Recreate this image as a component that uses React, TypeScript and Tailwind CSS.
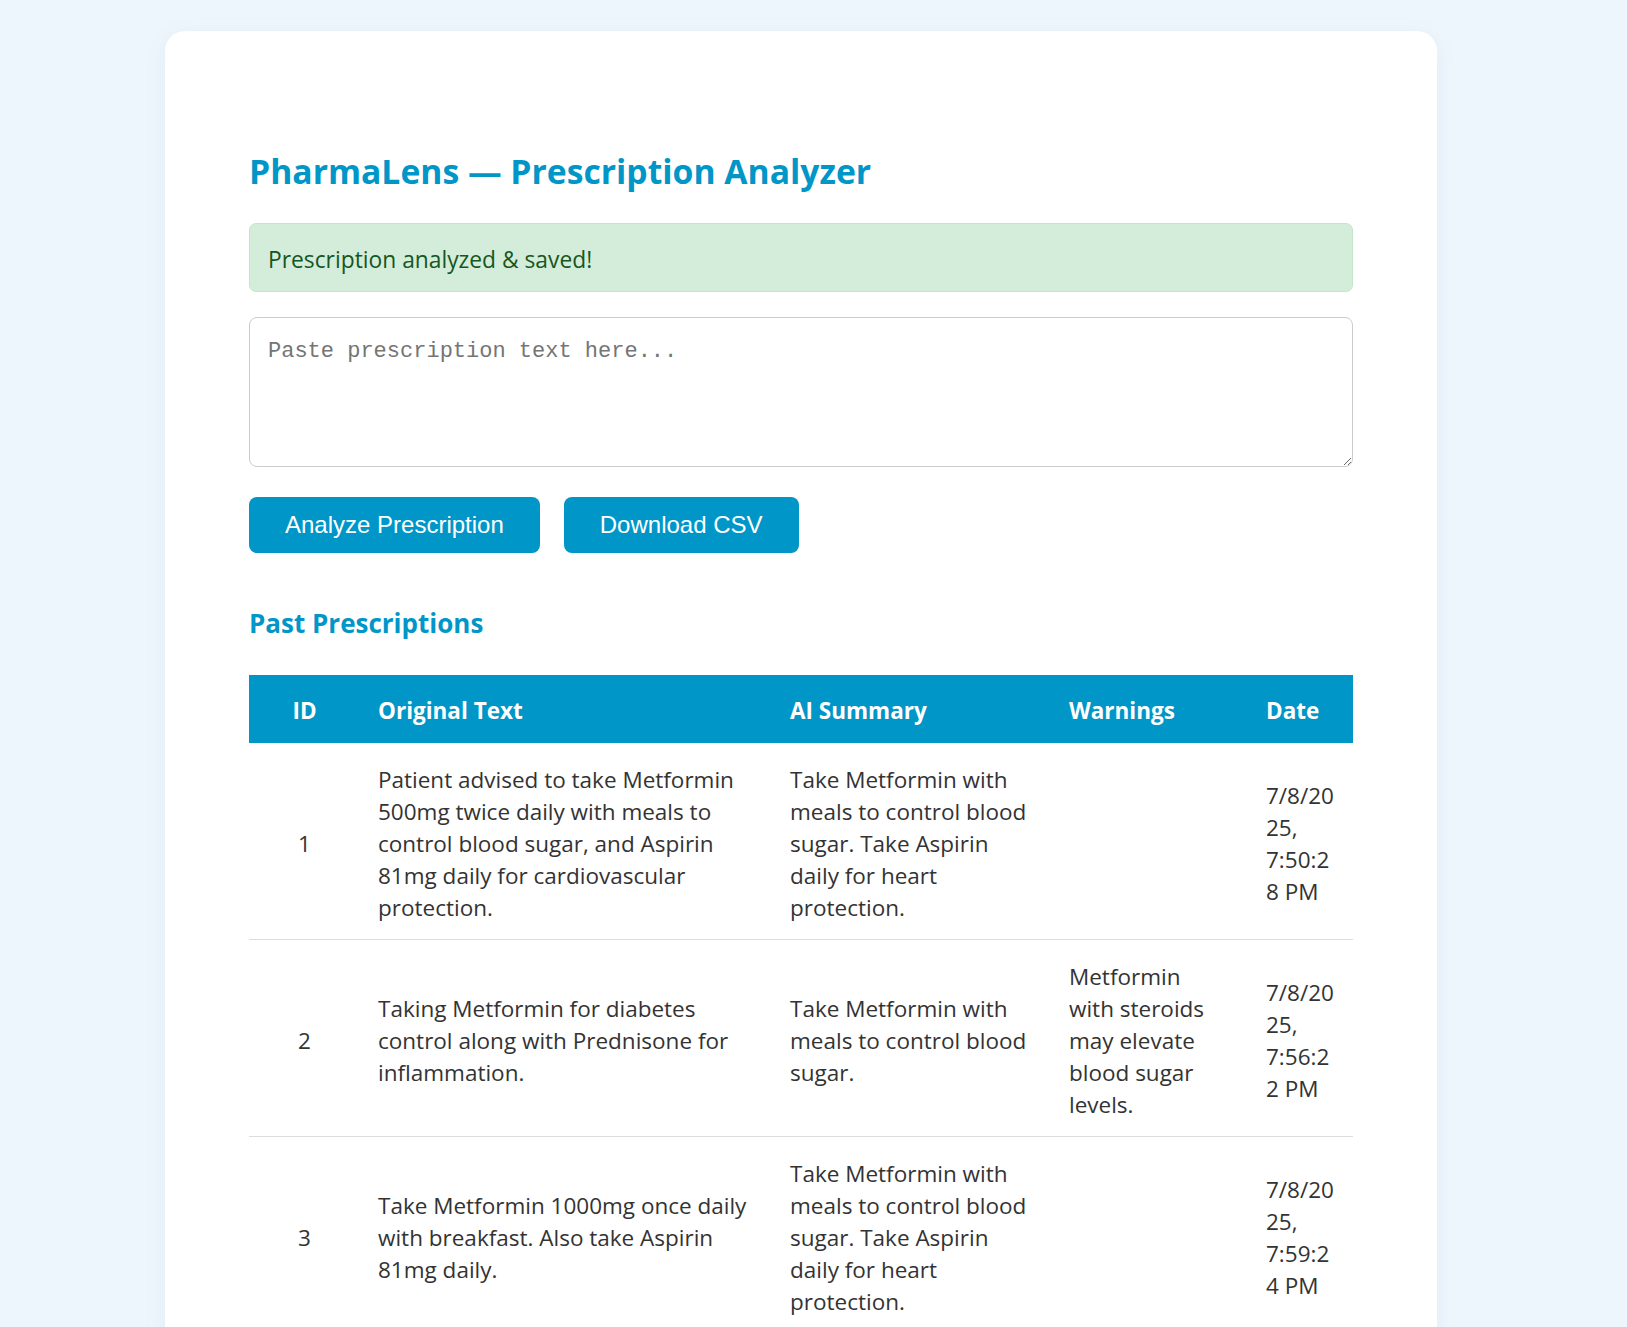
import React from "react";

type Row = {
  id: number;
  original: string[];
  summary: string[];
  warnings: string[];
  date: string[];
};

const rows: Row[] = [
  {
    id: 1,
    original: [
      "Patient advised to take Metformin",
      "500mg twice daily with meals to",
      "control blood sugar, and Aspirin",
      "81mg daily for cardiovascular",
      "protection.",
    ],
    summary: [
      "Take Metformin with",
      "meals to control blood",
      "sugar. Take Aspirin",
      "daily for heart",
      "protection.",
    ],
    warnings: [],
    date: ["7/8/20", "25,", "7:50:2", "8 PM"],
  },
  {
    id: 2,
    original: [
      "Taking Metformin for diabetes",
      "control along with Prednisone for",
      "inflammation.",
    ],
    summary: ["Take Metformin with", "meals to control blood", "sugar."],
    warnings: ["Metformin", "with steroids", "may elevate", "blood sugar", "levels."],
    date: ["7/8/20", "25,", "7:56:2", "2 PM"],
  },
  {
    id: 3,
    original: [
      "Take Metformin 1000mg once daily",
      "with breakfast. Also take Aspirin",
      "81mg daily.",
    ],
    summary: [
      "Take Metformin with",
      "meals to control blood",
      "sugar. Take Aspirin",
      "daily for heart",
      "protection.",
    ],
    warnings: [],
    date: ["7/8/20", "25,", "7:59:2", "4 PM"],
  },
];

function Lines({ lines }: { lines: string[] }) {
  return (
    <>
      {lines.map((l, i) => (
        <span key={i} className="block whitespace-nowrap">
          {l}
        </span>
      ))}
    </>
  );
}

export default function App() {
  return (
    <div
      className="h-[1327px] w-full overflow-hidden bg-[#eef6fd] pt-[31px]"
      style={{ fontFamily: '"Open Sans", "Noto Sans", sans-serif' }}
    >
      <div className="ml-[165px] w-[1272px] rounded-[20px] bg-white px-[84px] pt-[117px] pb-[60px] shadow-[0_4px_24px_rgba(0,80,140,0.06)]">
        <h1 className="text-[33.7px] font-bold leading-[46px] text-[#0096c7]">
          PharmaLens — Prescription Analyzer
        </h1>

        <div className="mt-[29px] flex h-[69px] items-center rounded-[7px] border border-[#c3e6cb] bg-[#d4edda] px-[18px] pt-[4px] text-[22.8px] leading-[32px] text-[#155724]">
          Prescription analyzed &amp; saved!
        </div>

        <textarea
          className="mt-[25px] block h-[150px] w-full rounded-[8px] border border-[#cccccc] bg-white px-[18px] pt-[21px] text-[22px] leading-[26px] text-[#333] outline-none placeholder:text-[#757575]"
          style={{ fontFamily: '"Liberation Mono", "DejaVu Sans Mono", monospace' }}
          placeholder="Paste prescription text here..."
        />

        <div className="mt-[30px] flex gap-[24px]">
          <button
            className="flex h-[56px] items-center rounded-[8px] bg-[#0096c7] px-[36px] text-[24px] text-white"
            style={{ fontFamily: '"Liberation Sans", Arial, sans-serif' }}
          >
            Analyze Prescription
          </button>
          <button
            className="flex h-[56px] items-center rounded-[8px] bg-[#0096c7] px-[36px] text-[24px] text-white"
            style={{ fontFamily: '"Liberation Sans", Arial, sans-serif' }}
          >
            Download CSV
          </button>
        </div>

        <h2 className="mt-[53px] text-[26px] font-bold leading-[34px] text-[#0096c7]">
          Past Prescriptions
        </h2>

        <table className="mt-[35px] w-full table-fixed border-collapse text-[22.5px] leading-[32px] text-[#333]">
          <colgroup>
            <col className="w-[111px]" />
            <col className="w-[412px]" />
            <col className="w-[279px]" />
            <col className="w-[197px]" />
            <col className="w-[105px]" />
          </colgroup>
          <thead>
            <tr className="bg-[#0096c7] text-white">
              <th className="px-[18px] pt-[20px] pb-[16px] text-center font-bold">ID</th>
              <th className="px-[18px] pt-[20px] pb-[16px] text-left font-bold">Original Text</th>
              <th className="px-[18px] pt-[20px] pb-[16px] text-left font-bold">AI Summary</th>
              <th className="px-[18px] pt-[20px] pb-[16px] text-left font-bold">Warnings</th>
              <th className="px-[18px] pt-[20px] pb-[16px] text-left font-bold">Date</th>
            </tr>
          </thead>
          <tbody>
            {rows.map((r) => (
              <tr key={r.id} className="border-b border-[#dddddd]">
                <td className="px-[18px] pt-[21px] pb-[15px] text-center align-middle">{r.id}</td>
                <td className="px-[18px] pt-[21px] pb-[15px] align-middle">
                  <Lines lines={r.original} />
                </td>
                <td className="px-[18px] pt-[21px] pb-[15px] align-middle">
                  <Lines lines={r.summary} />
                </td>
                <td className="px-[18px] pt-[21px] pb-[15px] align-middle">
                  <Lines lines={r.warnings} />
                </td>
                <td className="px-[18px] pt-[21px] pb-[15px] align-middle">
                  <Lines lines={r.date} />
                </td>
              </tr>
            ))}
          </tbody>
        </table>
      </div>
    </div>
  );
}
